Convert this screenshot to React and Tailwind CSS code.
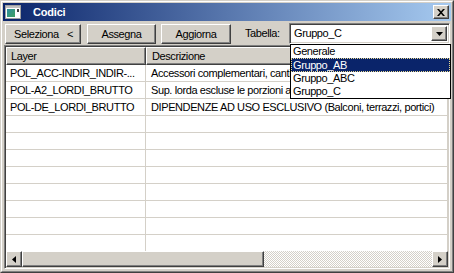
import React from "react";

const raised =
  "border border-t-white border-l-white border-r-[#404040] border-b-[#404040] shadow-[inset_-1px_-1px_#808080]";

function Btn({ className, children }) {
  return (
    <div className={`${raised} bg-[#d4d0c8] h-[20px] flex items-center ${className}`}>
      {children}
    </div>
  );
}

function TriDown() {
  return (
    <svg width="7" height="4" viewBox="0 0 7 4">
      <path d="M0 0h7L3.5 4z" fill="#000" />
    </svg>
  );
}

const rows = [
  ["POL_ACC-INDIR_INDIR-...", "Accessori complementari, cantine, soffitte, autorimesse"],
  ["POL-A2_LORDI_BRUTTO", "Sup. lorda escluse le porzioni accessorie"],
  ["POL-DE_LORDI_BRUTTO", "DIPENDENZE AD USO ESCLUSIVO (Balconi, terrazzi, portici)"],
  ["", ""],
  ["", ""],
  ["", ""],
  ["", ""],
  ["", ""],
  ["", ""],
  ["", ""],
  ["", ""],
];

export default function App() {
  return (
    <div className="relative w-[454px] h-[273px] overflow-hidden bg-[#d4d0c8] border border-t-[#d4d0c8] border-l-[#d4d0c8] border-r-[#404040] border-b-[#404040] font-['Liberation_Sans',Arial,sans-serif] text-[11px] tracking-[-0.4px] text-black">
      <div className="w-full h-full border border-t-white border-l-white border-r-[#808080] border-b-[#808080] p-[1px] flex flex-col">
        {/* Title bar */}
        <div className="h-[18px] shrink-0 flex items-center bg-[linear-gradient(to_right,#0a246a,#a6caf0)] pl-[2px] pr-[2px]">
          <svg width="16" height="16" viewBox="0 0 16 16" className="shrink-0">
            <rect x="0.5" y="1.5" width="15" height="13" fill="#fff" stroke="#a0a0a0" />
            <rect x="1" y="2" width="14" height="2" fill="#c0c0c0" />
            <defs>
              <linearGradient id="ig" x1="0" y1="0" x2="1" y2="1">
                <stop offset="0" stopColor="#2f8f9f" />
                <stop offset="1" stopColor="#3fa060" />
              </linearGradient>
            </defs>
            <rect x="2" y="5" width="8" height="8" fill="url(#ig)" />
            <rect x="12" y="5" width="2" height="3" fill="#404040" />
          </svg>
          <span className="ml-[12px] text-white font-bold text-[11px] tracking-[-0.2px] leading-none">Codici</span>
          <div className="flex-1" />
          <div className={`${raised} bg-[#d4d0c8] w-[16px] h-[14px] flex items-center justify-center`}>
            <svg width="8" height="7" viewBox="0 0 8 7">
              <path d="M0 0h2l2 2.3L6 0h2L5 3.5 8 7H6L4 4.7 2 7H0l3-3.5z" fill="#000" />
            </svg>
          </div>
        </div>

        {/* Toolbar */}
        <div className="h-[24px] shrink-0 flex items-center pl-[2px] pt-[1px]">
          <Btn className="w-[76px] justify-between pl-[8px] pr-[7px] mt-[1px]">
            <span>Seleziona</span>
            <span>&lt;</span>
          </Btn>
          <Btn className="w-[69px] justify-center ml-[6px] mt-[1px]">Assegna</Btn>
          <Btn className="w-[70px] justify-center ml-[5px] mt-[1px]">Aggiorna</Btn>
          <span className="ml-[14px] w-[44px]">Tabella:</span>
          <div className="ml-[0px] w-[161px] h-[21px] bg-white border border-t-[#808080] border-l-[#808080] border-r-white border-b-white shadow-[inset_1px_1px_#404040,inset_-1px_-1px_#d4d0c8] flex items-center pl-[4px] pr-[2px]">
            <span className="flex-1">Gruppo_C</span>
            <div className={`${raised} bg-[#d4d0c8] w-[16px] h-[15px] flex items-center justify-center`}>
              <TriDown />
            </div>
          </div>
        </div>

        {/* Grid */}
        <div className="flex-1 ml-[1px] mr-[1px] mb-[1px] flex flex-col bg-white border border-t-[#808080] border-l-[#808080] border-r-white border-b-white shadow-[inset_1px_1px_#404040,inset_-1px_-1px_#d4d0c8] p-[1px] overflow-hidden">
          <div className="flex-1 flex flex-col overflow-hidden">
            <div className="h-[18px] shrink-0 flex">
              <div className={`${raised} bg-[#d4d0c8] w-[140px] h-[18px] flex items-center pl-[4px]`}>Layer</div>
              <div className={`${raised} bg-[#d4d0c8] flex-1 h-[18px] flex items-center pl-[5px]`}>Descrizione</div>
            </div>
            <div className="flex-1 overflow-hidden">
              {rows.map((r, i) => (
                <div key={i} className="h-[17px] flex border-b border-[#d4d0c8]">
                  <div className="w-[140px] shrink-0 border-r border-[#d4d0c8] pl-[4px] leading-[16px] whitespace-nowrap overflow-hidden">
                    {r[0]}
                  </div>
                  <div className="flex-1 border-r border-[#d4d0c8] pl-[5px] leading-[16px] whitespace-nowrap overflow-hidden">
                    {r[1]}
                  </div>
                </div>
              ))}
            </div>
          </div>
          {/* Scrollbar */}
          <div className="h-[16px] shrink-0 flex bg-[repeating-conic-gradient(#d4d0c8_0_25%,#ffffff_0_50%)] bg-[length:2px_2px]">
            <div className={`${raised} bg-[#d4d0c8] w-[16px] h-[16px] flex items-center justify-center`}>
              <svg width="4" height="7" viewBox="0 0 4 7">
                <path d="M4 0v7L0 3.5z" fill="#000" />
              </svg>
            </div>
            <div className={`${raised} bg-[#d4d0c8] w-[242px] h-[16px]`} />
            <div className="flex-1" />
            <div className={`${raised} bg-[#d4d0c8] w-[16px] h-[16px] flex items-center justify-center`}>
              <svg width="4" height="7" viewBox="0 0 4 7">
                <path d="M0 0v7L4 3.5z" fill="#000" />
              </svg>
            </div>
          </div>
        </div>
      </div>

      {/* Dropdown list */}
      <div className="absolute left-[289px] top-[43px] w-[161px] h-[55px] bg-white border border-black flex flex-col">
        <div className="h-[13px] leading-[13px] pl-[2px]">Generale</div>
        <div className="h-[14px] leading-[12px] pl-[1px] bg-[#0a246a] text-white border border-dotted border-[#e8d890]">Gruppo_AB</div>
        <div className="h-[13px] leading-[13px] pl-[2px]">Gruppo_ABC</div>
        <div className="h-[13px] leading-[13px] pl-[2px]">Gruppo_C</div>
      </div>
    </div>
  );
}
